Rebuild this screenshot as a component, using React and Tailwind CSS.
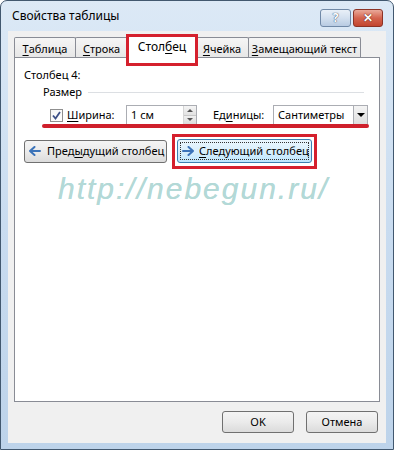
import React from 'react';

const U = ({ children }) => <span className="underline underline-offset-[2px] decoration-1">{children}</span>;

const tabs = [
  { label: [<U key="u">Т</U>, 'аблица'], w: 'w-[62px]' },
  { label: [<U key="u">С</U>, 'трока'], w: 'w-[53px]' },
  { label: ['Стол', <U key="u">б</U>, 'ец'], w: 'w-[72px]', active: true },
  { label: [<U key="u">Я</U>, 'чейка'], w: 'w-[54px]' },
  { label: [<U key="u">З</U>, 'амещающий текст'], w: 'w-[113px]' },
];

const Arrow = ({ dir }) => (
  <svg width="12" height="10" viewBox="0 0 12 10" className={dir === 'right' ? 'rotate-180 shrink-0' : 'shrink-0'}>
    <path d="M1 5 L5.5 1 M1 5 L5.5 9 M1 5 L11 5" stroke="#3b73b9" strokeWidth="2" fill="none" strokeLinecap="round" />
  </svg>
);

const App = () => {
  return (
    <div className="w-[394px] h-[450px] bg-white font-['Noto_Sans',sans-serif] text-[11px] leading-[16px] text-black whitespace-nowrap">
      <div className="h-full rounded-t-[7px] border border-[#42586f] bg-gradient-to-b from-[#dce9f6] via-[#c9dcf0] to-[#bdd3ea] flex flex-col px-[7px] pb-[6px]">
        {/* Title bar */}
        <div className="h-[30px] flex items-center justify-between pl-[4px]">
          <span className="text-[12px]">Свойства таблицы</span>
          <div className="flex gap-[2px] mt-[4px] mr-[3px]">
            <div className="w-[31px] h-[18px] rounded-[3px] border border-[#7089a7] bg-gradient-to-b from-[#e9f0f8] via-[#d3e0ef] to-[#b8cbe2] flex items-center justify-center">
              <span className="text-[12px] font-bold text-white [text-shadow:0_0_1px_#3a4c66,0_0_1px_#3a4c66]">?</span>
            </div>
            <div className="w-[30px] h-[18px] rounded-[3px] border border-[#8c3326] bg-gradient-to-b from-[#e9a99a] via-[#d4644f] to-[#c2452f] flex items-center justify-center">
              <span className="text-[12px] font-bold text-white [text-shadow:0_0_1px_#5a1a10,0_0_1px_#5a1a10]">✕</span>
            </div>
          </div>
        </div>

        {/* Body */}
        <div className="flex-1 bg-[#f0f0f0] flex flex-col">
          {/* Tabs */}
          <div className="flex items-end pl-[6px] pt-[4px] h-[27px]">
            {tabs.map((t, i) =>
              t.active ? (
                <div key={i} className={`${t.w} h-[23px] -mx-[2px] relative z-10 bg-white border border-b-0 border-[#898c95] rounded-t-[2px] flex items-center justify-center text-[12px]`}>
                  {t.label}
                  <div className="absolute -top-[2px] -bottom-[8px] -left-[1px] -right-[1px] border-[3px] border-[#d5202d]" />
                </div>
              ) : (
                <div key={i} className={`${t.w} h-[21px] pt-[2px] bg-gradient-to-b from-[#f5f5f5] to-[#e6e6e6] border border-b-0 border-[#898c95] -ml-px first:ml-0 rounded-t-[2px] flex items-center justify-center`}>
                  {t.label}
                </div>
              )
            )}
          </div>

          {/* Panel */}
          <div className="mx-[6px] -mt-px h-[345px] bg-white border border-[#898c95] pl-[9px] pt-[9px] relative">
            <div>Столбец 4:</div>
            <div className="flex items-center pl-[19px] mt-[1px]">
              <span>Размер</span>
              <div className="flex-1 h-px bg-[#dcdfe3] ml-[6px] mr-[15px]" />
            </div>

            {/* Width row */}
            <div className="relative mt-[5px] h-[20px] flex items-center pl-[26px]">
              <div className="w-[13px] h-[13px] border border-[#8f8f8f] bg-gradient-to-br from-[#f4f4f4] to-white flex items-center justify-center">
                <svg width="11" height="11" viewBox="0 0 11 11">
                  <path d="M2 5.5 L4.5 8.5 L9 2" stroke="#3c4f86" strokeWidth="1.8" fill="none" />
                </svg>
              </div>
              <span className="ml-[4px] w-[48px]"><U>Ш</U>ирина:</span>
              <div className="ml-[11px] w-[71px] h-[20px] flex border border-[#abadb3] bg-white">
                <span className="flex-1 pl-[4px] leading-[18px]">1 см</span>
                <div className="w-[13px] flex flex-col border-l border-[#d6d6d6]">
                  <div className="flex-1 bg-gradient-to-b from-[#f5f5f5] to-[#e2e2e2] flex items-center justify-center border-b border-[#c8c8c8]">
                    <div className="w-0 h-0 border-x-[3px] border-x-transparent border-b-[3px] border-b-[#555]" />
                  </div>
                  <div className="flex-1 bg-gradient-to-b from-[#f0f0f0] to-[#dcdcdc] flex items-center justify-center">
                    <div className="w-0 h-0 border-x-[3px] border-x-transparent border-t-[3px] border-t-[#555]" />
                  </div>
                </div>
              </div>
              <span className="ml-[16px] w-[49px]">Ед<U>и</U>ницы:</span>
              <div className="ml-[11px] w-[95px] h-[20px] flex border border-[#abadb3] bg-white">
                <span className="flex-1 pl-[4px] leading-[18px]">Сантиметры</span>
                <div className="w-[14px] border-l border-[#abadb3] bg-gradient-to-b from-[#f4f4f4] to-[#dedede] flex items-center justify-center">
                  <div className="w-0 h-0 border-x-[4px] border-x-transparent border-t-[4px] border-t-black" />
                </div>
              </div>
              <div className="absolute left-[18px] w-[327px] -bottom-[3px] h-[4px] rounded-full bg-[#cf1f2b]" />
            </div>

            {/* Prev / next */}
            <div className="flex items-center mt-[14px]">
              <div className="w-[143px] h-[23px] rounded-[3px] border border-[#707070] bg-gradient-to-b from-[#f4f4f4] via-[#ebebeb] to-[#dbdbdb] flex items-center pl-[4px] gap-[6px]">
                <Arrow dir="left" />
                <span>Пред<U>ы</U>дущий столбец</span>
              </div>
              <div className="relative ml-[10px]">
                <div className="w-[135px] h-[24px] rounded-[3px] border border-[#3c7fb1] bg-gradient-to-b from-[#eaf6fd] via-[#d9effc] to-[#bee6fd] p-[2px]">
                  <div className="h-full border border-dotted border-[#333] flex items-center pl-[1px] gap-[5px]">
                    <Arrow dir="right" />
                    <span><U>С</U>ледующий столбец</span>
                  </div>
                </div>
                <div className="absolute -top-[5px] -bottom-[6px] -left-[5px] -right-[5px] border-[3px] border-[#d5202d]" />
              </div>
            </div>

            {/* Watermark */}
            <div className="mt-[8px] pl-[34px] font-['Liberation_Sans',sans-serif] italic text-[30px] leading-[36px] tracking-[2px] text-[#b3d9d7] [text-shadow:0_0_0.6px_#b3d9d7]">
              http://nebegun.ru/
            </div>
          </div>

          {/* Bottom buttons */}
          <div className="flex justify-end gap-[12px] pr-[8px] mt-[9px]">
            <div className="w-[72px] h-[22px] rounded-[3px] border border-[#707070] bg-gradient-to-b from-[#f4f4f4] via-[#ebebeb] to-[#dbdbdb] flex items-center justify-center">OK</div>
            <div className="w-[72px] h-[22px] rounded-[3px] border border-[#707070] bg-gradient-to-b from-[#f4f4f4] via-[#ebebeb] to-[#dbdbdb] flex items-center justify-center">Отмена</div>
          </div>
        </div>
      </div>
    </div>
  );
};

export default App;
